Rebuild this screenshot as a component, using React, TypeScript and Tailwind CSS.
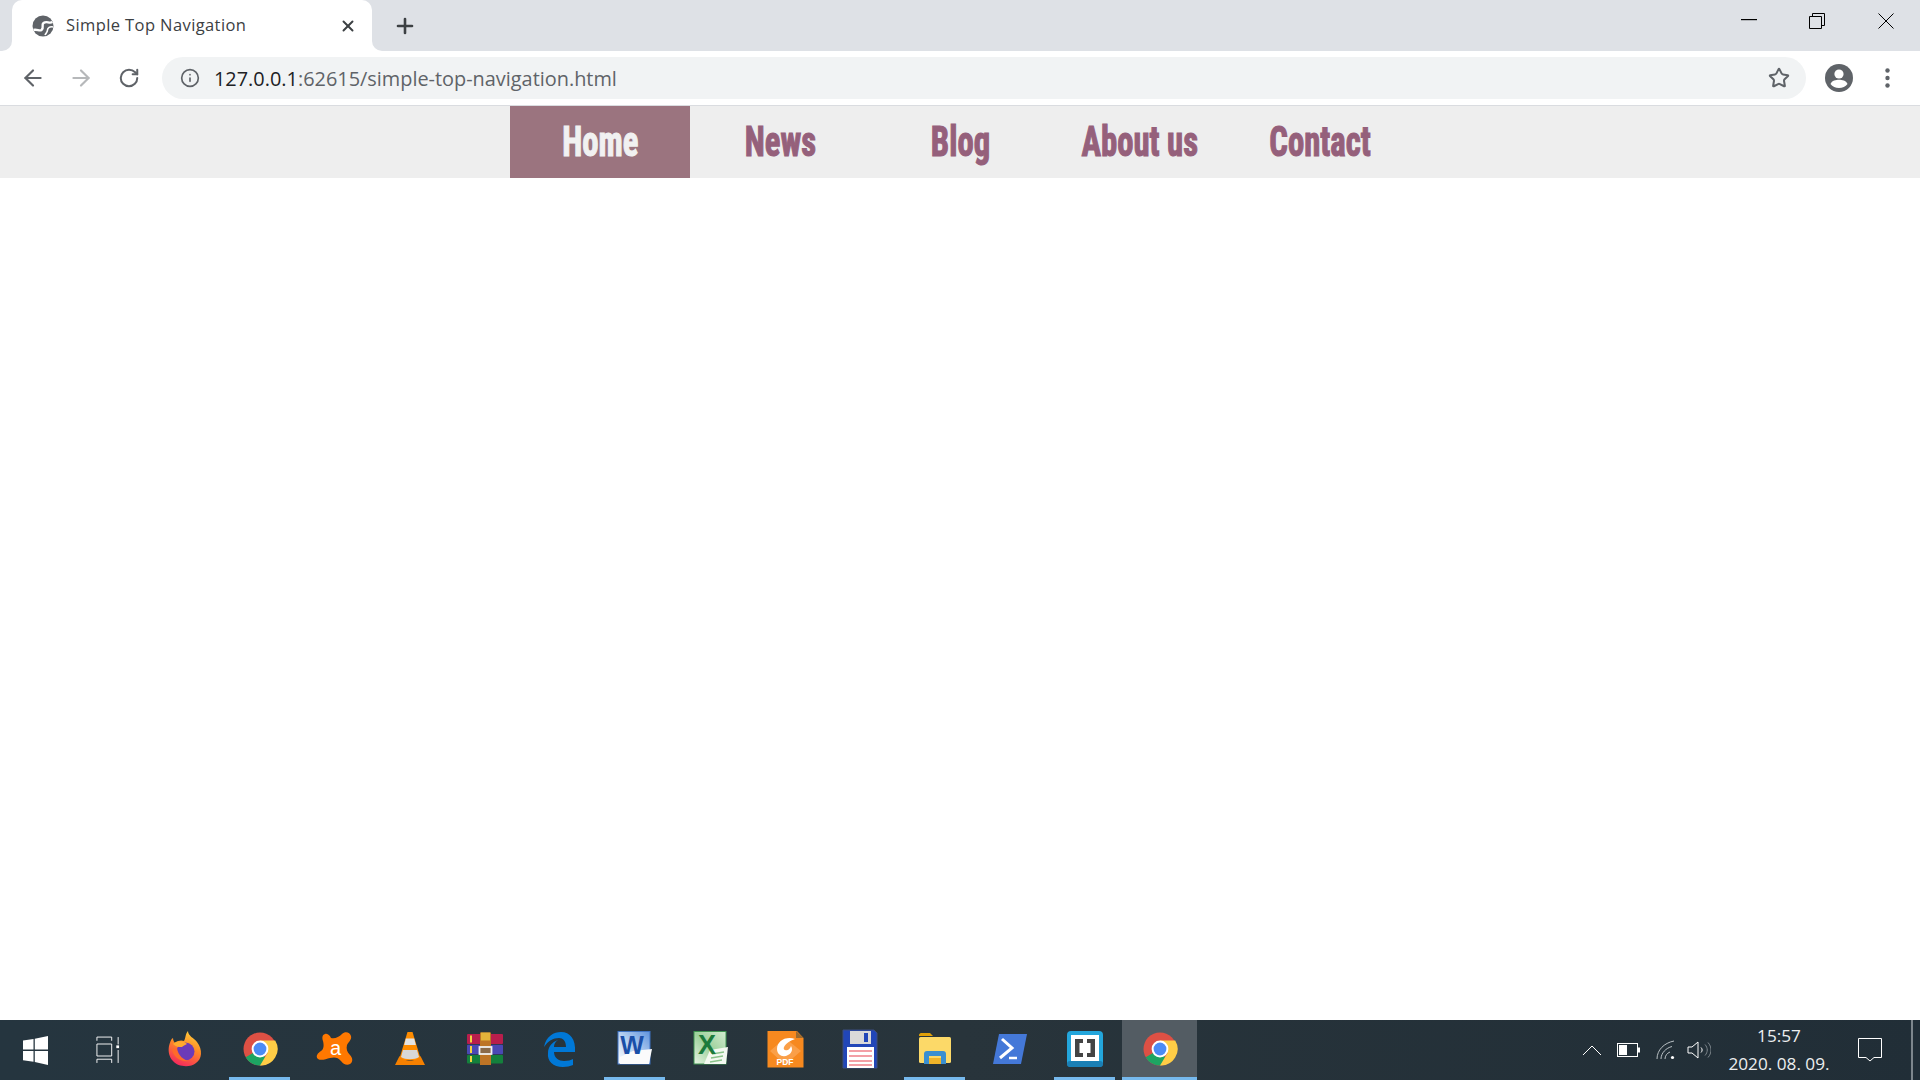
import { ArrowLeft, ArrowRight, RotateCw, Star, X, Plus, Info } from 'lucide-react'
import type { ReactNode } from 'react'

const navItems = ['Home', 'News', 'Blog', 'About us', 'Contact']

// ── Taskbar icons ─────────────────────────────────────────────────────────

function Ico({ children }: { children: ReactNode }) {
  return (
    <svg width="40" height="40" viewBox="0 0 40 40">
      {children}
    </svg>
  )
}

function ChromeIcon() {
  return (
    <Ico>
      <circle cx="20" cy="20" r="16.5" fill="#dd5044" />
      <path d="M20 20 L5.7 28.2 A16.5 16.5 0 0 0 20 36.5 L28.2 34.3 Z" fill="#1da462" />
      <path d="M20 11.5 H35.2 A16.5 16.5 0 0 1 20 36.5 L27.5 24 Z" fill="#ffcd46" />
      <circle cx="20" cy="20" r="8.4" fill="#fff" />
      <circle cx="20" cy="20" r="6.4" fill="#4c8bf5" />
    </Ico>
  )
}

function FirefoxIcon() {
  return (
    <Ico>
      <defs>
        <linearGradient id="ff" x1="0.75" y1="0" x2="0.35" y2="1">
          <stop offset="0" stopColor="#ffd23c" />
          <stop offset="0.45" stopColor="#ff8a25" />
          <stop offset="1" stopColor="#f5275e" />
        </linearGradient>
      </defs>
      <path d="M23 2 C23 7 29 9 32 13 C38 21 37 30 31 34 C25 39 13 38 8 32 C4 28 3 22 4 17 C5 13 6 10 8 9 C8 11 9 13 10 14 C13 11 17 11 19 12 C21 9 20 5 23 2 Z" fill="url(#ff)" />
      <circle cx="20.5" cy="22.5" r="9" fill="#6b3bb8" />
      <path d="M8 15 C12 11 19 12 22 15 C20 16 18 17 17 18 C14 18 11 18 8 15 Z" fill="#ffa92e" />
      <path d="M7 20 C8 28 15 33 24 32 C19 31 13 27 12 19 Z" fill="#ff6a2a" />
    </Ico>
  )
}

function AvastIcon() {
  return (
    <Ico>
      <path d="M10 5 C13 4 15 7 16 9 C20 10 24 8 27 5 C30 2 35 3 36 7 C37 11 33 13 32 16 C31 20 32 23 35 26 C38 29 38 33 35 35 C32 37 28 35 26 32 C23 28 19 28 15 29 C11 30 6 32 3 30 C0 27 3 24 6 22 C9 20 9 16 8 12 C7 9 7 6 10 5 Z" fill="#ff7800" />
      <text x="20.5" y="25.5" textAnchor="middle" fontSize="20" fontFamily="'Liberation Sans', sans-serif" fill="#fff">a</text>
    </Ico>
  )
}

function VlcIcon() {
  return (
    <Ico>
      <path d="M17.5 3 H22.5 L31 31 H9 Z" fill="#ff8c00" />
      <path d="M15.8 9.5 H24.2 L25.8 16 H14.2 Z" fill="#e4e4e4" />
      <path d="M13 21 H27 L29 28 C25 31 15 31 11 28 Z" fill="#d8d8d8" />
      <path d="M9.5 27 L5 36 H35 L30.5 27 C27 33 13 33 9.5 27 Z" fill="#f58000" />
    </Ico>
  )
}

function WinrarIcon() {
  return (
    <Ico>
      <rect x="2" y="5" width="36" height="10" rx="1" fill="#b81e4c" />
      <rect x="2" y="15.7" width="36" height="9.5" rx="1" fill="#4a48b4" />
      <rect x="2" y="26" width="36" height="8.5" rx="1" fill="#14803c" />
      <rect x="5" y="6.5" width="2" height="7" fill="#f5d442" />
      <rect x="5" y="17" width="2" height="7" fill="#f5d442" />
      <rect x="5" y="27" width="2" height="6" fill="#f5d442" />
      <rect x="15" y="3.5" width="11" height="32.5" fill="#bd7426" />
      <rect x="16" y="3.5" width="9" height="8" fill="#e3b23a" />
      <rect x="14.5" y="18" width="12" height="7" fill="#8a6a4a" stroke="#f0f0f0" strokeWidth="1.8" />
    </Ico>
  )
}

function EdgeIcon() {
  return (
    <Ico>
      <path d="M4 18 C6 7 14 3 21 3 C30 3 36 10 35 23 H14 C14 29 19 32 24 32 C28 32 31 31 33 30 V36 C30 37 27 38 23 38 C13 38 7 32 8 24 C8 18 12 13 18 11 C15 13 14 15 14 18 H26 C26 12 23 9 19 9 C13 9 8 12 4 18 Z" fill="#0078d7" />
    </Ico>
  )
}

function WordIcon() {
  return (
    <Ico>
      <defs>
        <linearGradient id="wd" x1="1" y1="0" x2="0" y2="1">
          <stop offset="0" stopColor="#5f93dc" />
          <stop offset="0.6" stopColor="#c8dcf5" />
          <stop offset="1" stopColor="#ffffff" />
        </linearGradient>
      </defs>
      <rect x="3" y="2.5" width="32" height="32.5" fill="url(#wd)" stroke="#3f73c4" />
      <path d="M18 22 L37 20 L34 35 L5 35 L5 28 Z" fill="#fbfbfb" />
      <text x="17" y="25" textAnchor="middle" fontSize="25" fontWeight="700" fontFamily="'Liberation Sans', sans-serif" fill="#1a4fa8">W</text>
    </Ico>
  )
}

function ExcelIcon() {
  return (
    <Ico>
      <defs>
        <linearGradient id="xl" x1="1" y1="0" x2="0" y2="1">
          <stop offset="0" stopColor="#d5ecd2" />
          <stop offset="0.5" stopColor="#9dd19b" />
          <stop offset="1" stopColor="#e8f4e4" />
        </linearGradient>
      </defs>
      <rect x="4" y="2.5" width="32" height="32.5" fill="url(#xl)" stroke="#3f9450" />
      <path d="M20 21 L38 18 L36 35 L14 35 Z" fill="#f4f9f1" />
      <path d="M22 25 L34 23 M21 29 L33 27 M20 33 L32 31" stroke="#8bc48a" strokeWidth="1.3" />
      <text x="17" y="25" textAnchor="middle" fontSize="27" fontWeight="700" fontFamily="'Liberation Sans', sans-serif" fill="#1d7b3c">X</text>
    </Ico>
  )
}

function FoxitIcon() {
  return (
    <Ico>
      <path d="M2.5 2 H32 L38.5 9 V38.5 H2.5 Z" fill="#f7891f" />
      <path d="M31 2 L38.5 9 H31 Z" fill="#9a6a30" />
      <path d="M20 9 L36 22 L20 36 L5 22 Z" fill="#fa9f48" />
      <path d="M30 10 C21 7 12 12 12 20 C12 26 18 29 23 26 C27 24 28 20 26 17 C25 20 23 22 20 21 C17 20 19 14 30 10 Z" fill="#fff" />
      <text x="20" y="36" textAnchor="middle" fontSize="8.5" fontWeight="700" fontFamily="'Liberation Sans', sans-serif" fill="#fff">PDF</text>
    </Ico>
  )
}

function FloppyIcon() {
  return (
    <Ico>
      <path d="M3 1 H34 L37 4 V39 H3 Z" fill="#2146b8" stroke="#3b4c80" />
      <rect x="10" y="2" width="21" height="13" fill="#d9d9d9" />
      <rect x="24" y="4" width="4" height="9" fill="#2146b8" />
      <rect x="7" y="18" width="27" height="21" fill="#fff" />
      <path d="M9 22 H32 M9 27 H32 M9 32 H32 M9 36 H32" stroke="#e8414f" strokeWidth="1.2" />
    </Ico>
  )
}

function ExplorerIcon() {
  return (
    <Ico>
      <path d="M4 6 C4 5 5 4 6 4 H15 L18 7 H4 Z" fill="#e0a008" />
      <rect x="4" y="8" width="32" height="26" rx="1.5" fill="#fcd968" />
      <path d="M9 35 V25 C9 23 10 22 12 22 H28 C30 22 31 23 31 25 V35 H26 V27 H14 V35 Z" fill="#3a8fd0" />
      <rect x="14" y="29" width="12" height="6" fill="#f0b429" />
    </Ico>
  )
}

function PowerShellIcon() {
  return (
    <Ico>
      <path d="M9 5 H37 L31 35 H3 Z" fill="#4478d8" />
      <path d="M12 10 L22 19 L10 29" fill="none" stroke="#fff" strokeWidth="3" />
      <path d="M19 29 H27" stroke="#fff" strokeWidth="2.5" />
    </Ico>
  )
}

function BracketsIcon() {
  return (
    <Ico>
      <rect x="2" y="2" width="36" height="36" rx="4" fill="#23a6dc" />
      <rect x="2" y="32" width="36" height="6" rx="3" fill="#1a7fb5" />
      <rect x="6" y="6" width="28" height="26" fill="#fff" />
      <path d="M10 10 H18 V14 H14.5 V24 H18 V28 H10 Z" fill="#444" />
      <path d="M30 10 H22 V14 H25.5 V24 H22 V28 H30 Z" fill="#444" />
    </Ico>
  )
}

function WindowsLogo() {
  return (
    <svg width="25" height="29" viewBox="0 0 25 29" fill="#fff">
      <path d="M0 4.5 L10.5 3 V13.5 H0 Z" />
      <path d="M11.8 2.8 L25 0 V13.5 H11.8 Z" />
      <path d="M0 15 H10.5 V25.8 L0 24.3 Z" />
      <path d="M11.8 15 H25 V29 L11.8 26 Z" />
    </svg>
  )
}

function TaskView() {
  return (
    <svg width="24" height="28" viewBox="0 0 26 30" fill="none" stroke="#fff" strokeWidth="1">
      <path d="M1 5 V1 H17 V5 M1 8.5 H17 V21.5 H1 Z M1 29 V25 H17 V29" />
      <path d="M24 1 V9 M24 15 V29" />
      <rect x="22" y="10" width="3" height="3" fill="#fff" stroke="none" />
    </svg>
  )
}

// ── Browser chrome ────────────────────────────────────────────────────────

function TabStrip() {
  return (
    <div className="flex h-[51px] items-stretch bg-[#dee1e6] pl-3">
      <div className="relative flex w-[360px] items-center rounded-t-[10px] bg-white pl-5 pr-4">
        <span className="absolute bottom-0 left-[-10px] h-[10px] w-[10px] bg-white" />
        <span className="absolute bottom-0 left-[-10px] h-[10px] w-[10px] rounded-br-[10px] bg-[#dee1e6]" />
        <span className="absolute bottom-0 right-[-10px] h-[10px] w-[10px] bg-white" />
        <span className="absolute bottom-0 right-[-10px] h-[10px] w-[10px] rounded-bl-[10px] bg-[#dee1e6]" />
        <svg width="22" height="22" viewBox="0 0 22 22">
          <circle cx="11" cy="11" r="10.5" fill="#5f6368" />
          <path d="M20.5 7 C17 9 15 5.5 11.5 8 C9 10 12.5 12.5 9.5 15 C7.5 16.5 5 14 1.5 15" fill="none" stroke="#fff" strokeWidth="2.4" />
          <path d="M21 12 C18 11 15.5 13 15.5 15 C15.5 17 14 18 13 20" fill="none" stroke="#fff" strokeWidth="1.6" />
        </svg>
        <span className="ml-[12px] flex-1 font-['Open_Sans',sans-serif] text-[16.5px] tracking-[0.4px] text-[#3c4043]">Simple Top Navigation</span>
        <X size={18} strokeWidth={2.6} className="mr-[-1px] text-[#3c4043]" />
      </div>
      <div className="ml-[21px] flex items-center">
        <Plus size={24} strokeWidth={2.6} className="text-[#3c4043]" />
      </div>
      <div className="ml-auto flex items-start pr-[26px] pt-[13px] text-black">
        <svg width="16" height="2" viewBox="0 0 16 2" className="mr-[52px] mt-[6px]">
          <rect width="16" height="1.2" fill="#000" />
        </svg>
        <svg width="16" height="16" viewBox="0 0 16 16" fill="none" stroke="#000" strokeWidth="1" className="mr-[53px]">
          <path d="M0.5 3.5 H12.5 V15.5 H0.5 Z M3.5 3.5 V0.5 H15.5 V12.5 H12.5" />
        </svg>
        <svg width="16" height="16" viewBox="0 0 16 16" stroke="#000" strokeWidth="1">
          <path d="M0.5 0.5 L15.5 15.5 M15.5 0.5 L0.5 15.5" />
        </svg>
      </div>
    </div>
  )
}

function Toolbar() {
  return (
    <div className="flex h-[55px] items-center border-b border-[#dadce0] bg-white py-[2px]">
      <div className="flex w-[162px] items-center px-[20px]">
        <ArrowLeft size={26} strokeWidth={2} className="text-[#5f6368]" />
        <ArrowRight size={26} strokeWidth={2} className="ml-[22px] text-[#b6b8ba]" />
        <RotateCw size={22} strokeWidth={2.2} className="ml-6 text-[#5f6368]" />
      </div>
      <div className="flex h-[42px] w-[1644px] items-center rounded-full bg-[#f1f3f4] pl-[18px] pr-[16px]">
        <Info size={20} strokeWidth={2} className="text-[#5f6368]" />
        <span className="ml-[14px] flex-1 pt-[1px] font-['Open_Sans',sans-serif] text-[19.9px] text-[#5f6368]">
          <span className="text-[#202124]">127.0.0.1</span>:62615/simple-top-navigation.html
        </span>
        <Star size={22} strokeWidth={2.2} className="text-[#5f6368]" />
      </div>
      <div className="ml-[19px] flex items-center">
        <svg width="28" height="28" viewBox="0 0 28 28">
          <circle cx="14" cy="14" r="14" fill="#5f6368" />
          <circle cx="14" cy="10" r="4.6" fill="#fff" />
          <path d="M5.5 20 C7 16.5 11 15.8 14 15.8 C17 15.8 21 16.5 22.5 20 C20.5 22.5 17.5 24 14 24 C10.5 24 7.5 22.5 5.5 20 Z" fill="#fff" />
        </svg>
        <svg width="5" height="20" viewBox="0 0 5 20" fill="#5f6368" className="ml-[32px]">
          <circle cx="2.5" cy="2.5" r="2.2" />
          <circle cx="2.5" cy="10" r="2.2" />
          <circle cx="2.5" cy="17.5" r="2.2" />
        </svg>
      </div>
    </div>
  )
}

// ── Page ──────────────────────────────────────────────────────────────────

function TopNav() {
  return (
    <nav className="flex h-[72px] justify-center bg-[#eeeeee]">
      {navItems.map((item, i) => (
        <a
          key={item}
          href="#"
          className={`flex w-[180px] items-center justify-center pb-[2px] font-['Liberation_Sans_Narrow','Roboto_Condensed','Liberation_Sans',sans-serif] text-[38px] font-bold ${
            i === 0 ? 'bg-[#9b747f] text-[#f1f1f1]' : 'text-[#95607b]'
          }`}
        >
          <span className="inline-block scale-x-[0.86] scale-y-[1.12] whitespace-nowrap [-webkit-text-stroke:1px_currentColor]">
            {item}
          </span>
        </a>
      ))}
    </nav>
  )
}

// ── Taskbar ───────────────────────────────────────────────────────────────

const apps = [
  { icon: <FirefoxIcon />, open: false },
  { icon: <ChromeIcon />, open: true },
  { icon: <AvastIcon />, open: false },
  { icon: <VlcIcon />, open: false },
  { icon: <WinrarIcon />, open: false },
  { icon: <EdgeIcon />, open: false },
  { icon: <WordIcon />, open: true },
  { icon: <ExcelIcon />, open: false },
  { icon: <FoxitIcon />, open: false },
  { icon: <FloppyIcon />, open: false },
  { icon: <ExplorerIcon />, open: true },
  { icon: <PowerShellIcon />, open: false },
  { icon: <BracketsIcon />, open: true },
  { icon: <ChromeIcon />, open: true, active: true },
]

function Taskbar() {
  return (
    <div className="flex h-[60px] items-stretch bg-gradient-to-r from-[#25353f] via-[#28343b] to-[#212e37]">
      <div className="flex w-[71px] items-center justify-center">
        <WindowsLogo />
      </div>
      <div className="flex w-[76px] items-center justify-center pr-[3px]">
        <TaskView />
      </div>
      {apps.map((app, i) => (
        <div
          key={i}
          className={`relative flex w-[75px] items-center justify-center pb-[2px] ${app.active ? 'bg-[#535c63]' : ''}`}
        >
          {app.icon}
          {app.open && (
            <span className={`absolute bottom-0 h-[3px] bg-[#76b9ed] ${app.active ? 'inset-x-0' : 'inset-x-[7px]'}`} />
          )}
        </div>
      ))}
      <div className="ml-auto flex items-center pr-[7px] text-white">
        <svg width="22" height="12" viewBox="0 0 22 12" fill="none" stroke="#fff" strokeWidth="1" className="mr-[14px]">
          <path d="M2 11 L11 2 L20 11" />
        </svg>
        <svg width="24" height="14" viewBox="0 0 24 14" className="mr-[15px]">
          <rect x="0.5" y="0.5" width="20" height="13" fill="none" stroke="#fff" />
          <rect x="2" y="2" width="8" height="10" fill="#fff" />
          <rect x="21" y="4.5" width="2" height="5" fill="#fff" />
        </svg>
        <svg width="20" height="20" viewBox="0 0 20 20" fill="none" stroke="#b9c0c4" strokeWidth="1" className="mr-[11px]">
          <path d="M1 19 C1 10 8 3 18 1 M5 19 C5 13 10 8 16 6.5 M9 19 C9 16 11 13 14 12" />
          <circle cx="16.5" cy="17.5" r="1.6" fill="#fff" stroke="none" />
        </svg>
        <svg width="24" height="18" viewBox="0 0 24 18" fill="none" stroke="#fff" strokeWidth="1" className="mr-[15px]">
          <path d="M1 6 H5 L11 1 V17 L5 12 H1 Z" />
          <path d="M14 6.5 C15.5 8 15.5 10 14 11.5" />
          <path d="M18 3.5 C21 7 21 11 18 14.5 M21 1.5 C25 6 25 12 21 16.5" stroke="#7f888e" />
        </svg>
        <div className="w-[106px] text-center font-['Open_Sans',sans-serif] text-[17.2px] leading-[28px] text-[#eceeef]">
          <div>15:57</div>
          <div className="whitespace-nowrap">2020. 08. 09.</div>
        </div>
        <svg width="24" height="24" viewBox="0 0 24 24" fill="none" stroke="#fff" strokeWidth="1" className="ml-[26px] mr-[29px]">
          <path d="M0.5 0.5 H23.5 V19.5 H16 L12 23 L8 19.5 H0.5 Z" />
        </svg>
        <span className="h-full w-[2px] bg-[#7d868c]" />
      </div>
    </div>
  )
}

export default function App() {
  return (
    <div className="flex h-screen flex-col overflow-hidden bg-white">
      <TabStrip />
      <Toolbar />
      <TopNav />
      <main className="flex-1 bg-white" />
      <Taskbar />
    </div>
  )
}
